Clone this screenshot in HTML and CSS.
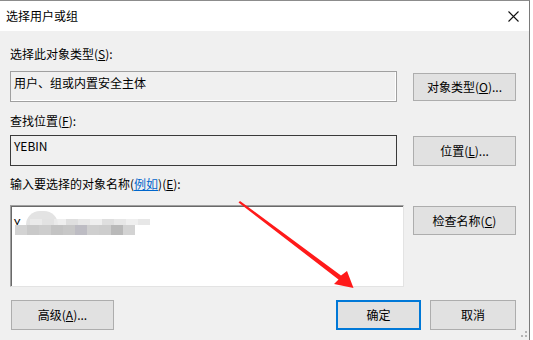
FILE: index.html
```
<!DOCTYPE html>
<html lang="zh-CN">

<head>
    <meta charset="UTF-8">
    <title>选择用户或组</title>
    <link rel="stylesheet" href="styles.css">
</head>

<body>
    <div class="window">
        <div class="titlebar">
            <span class="title">选择用户或组</span>
            <svg class="close" width="11" height="11" viewBox="0 0 11 11">
                <path d="M0.5 0.5 L10.5 10.5 M10.5 0.5 L0.5 10.5" stroke="#111" stroke-width="1.1" fill="none"/>
            </svg>
        </div>

        <div class="content">
            <div class="label label-type">选择此对象类型(<u>S</u>):</div>
            <div class="row row-type">
                <div class="field">用户、组或内置安全主体</div>
                <button class="btn">对象类型(<u>O</u>)...</button>
            </div>

            <div class="label label-location">查找位置(<u>F</u>):</div>
            <div class="row row-location">
                <div class="field field-dark">YEBIN</div>
                <button class="btn">位置(<u>L</u>)...</button>
            </div>

            <div class="label label-names">输入要选择的对象名称(<a class="link">例如</a>)(<u>E</u>):</div>
            <div class="row row-names">
                <div class="names">
                    <span class="names-text">Y</span>
                    <!-- blurred account name -->
                    <div class="mosaic">
                        <div class="blob"></div>
                        <div class="mosaic-top">
                            <i class="m1"></i><i class="m2"></i><i class="m1"></i><i class="m3"></i><i class="m2"></i><i class="m1"></i><i class="m3"></i><i class="m2"></i><i class="m1"></i><i class="m2"></i>
                        </div>
                        <div class="mosaic-bottom">
                            <i class="b1"></i><i class="b2"></i><i class="b3"></i><i class="b4"></i><i class="b5"></i><i class="b6"></i><i class="b7"></i><i class="b3"></i><i class="b8"></i><i class="b1"></i>
                        </div>
                    </div>
                </div>
                <button class="btn btn-check">检查名称(<u>C</u>)</button>
            </div>

            <div class="actions">
                <button class="btn btn-advanced">高级(<u>A</u>)...</button>
                <button class="btn btn-ok">确定</button>
                <button class="btn btn-cancel">取消</button>
            </div>
        </div>

        <svg class="grip" width="6" height="6" viewBox="0 0 6 6">
            <rect x="4" y="0" width="2" height="2" fill="#b4b4b4"/>
            <rect x="0" y="4" width="2" height="2" fill="#b4b4b4"/>
            <rect x="4" y="4" width="2" height="2" fill="#b4b4b4"/>
        </svg>
    </div>

    <!-- red annotation arrow -->
    <svg class="arrow" width="533" height="340" viewBox="0 0 533 340">
        <polygon points="238.5,202.5 240,201 341,275.5 347,271 353.5,288 334,284 338.5,279.5" fill="#ff1a1a"/>
    </svg>
</body>

</html>
```

FILE: styles.css
```
* {
    box-sizing: border-box;
}

body {
    margin: 0;
    background: #ffffff;
    font-family: "Noto Sans CJK SC", "Noto Sans", sans-serif;
    font-size: 12px;
    line-height: 16px;
    color: #000;
    width: 533px;
    height: 340px;
    overflow: hidden;
    position: relative;
}

.window {
    width: 530px;
    height: 340px;
    background-color: #f0f0f0;
    border-top: 1px solid #8c8c8c;
    border-right: 1px solid #7a7a7a;
    position: relative;
}

.titlebar {
    height: 30px;
    background: #ffffff;
    display: flex;
    align-items: center;
    padding-left: 6px;
}

.title {
    flex: 1;
    font-size: 12px;
}

.close {
    margin-right: 10px;
}

.content {
    padding: 15px 0 0 10px;
    width: 516px;
}

.label {
    height: 16px;
}

.label-type {
    margin-bottom: 9px;
}

.label-location {
    margin-bottom: 6px;
}

.label-names {
    margin-bottom: 13px;
}

.link {
    color: #0066cc;
    text-decoration: underline;
}

.row {
    display: flex;
    align-items: flex-start;
}

.row-type {
    margin-bottom: 11px;
}

.row-location {
    margin-bottom: 10px;
}

.row-names {
    margin-bottom: 13px;
}

.field {
    width: 387px;
    height: 31px;
    border: 1px solid #a0a0a0;
    box-shadow: inset -1px -1px 0 #ffffff;
    padding: 3px 3px;
}

.field-dark {
    border-color: #3a3a3a;
    box-shadow: none;
    padding-top: 2px;
}

.btn {
    font-family: inherit;
    font-size: 12px;
    line-height: 16px;
    color: #000;
    background: #e1e1e1;
    border: 1px solid #adadad;
    padding: 0;
    width: 103px;
    margin-left: 16px;
}

.row-type .btn {
    height: 28px;
    margin-top: 2px;
}

.row-location .btn {
    height: 30px;
    margin-top: 1px;
}

.names {
    width: 394px;
    height: 82px;
    background: #ffffff;
    border-top: 1px solid #a0a0a0;
    border-left: 1px solid #a0a0a0;
    border-right: 1px solid #e3e3e3;
    border-bottom: 1px solid #e3e3e3;
    box-shadow: inset 1px 1px 0 #696969;
    padding: 9px 2px;
    position: relative;
}

.names-text {
    display: block;
    padding-left: 1px;
}

.mosaic {
    position: absolute;
    left: 4px;
    top: 4px;
    width: 122px;
    height: 26px;
}

.blob {
    position: absolute;
    left: 11px;
    top: 1px;
    width: 32px;
    height: 14px;
    border-radius: 16px 16px 0 0;
    background: #e3e3e3;
}

.mosaic-top,
.mosaic-bottom {
    position: absolute;
    left: 0;
    display: flex;
}

.mosaic-top {
    top: 9px;
    left: 15px;
    height: 6px;
    opacity: 0.8;
}

.mosaic-bottom {
    top: 15px;
    height: 10px;
}

.mosaic i {
    display: block;
    width: 12px;
    height: 100%;
}

.m1 { background: #ececec; }
.m2 { background: #e2e2e2; }
.m3 { background: #d8d8d8; }

.b1 { background: #d3d3d3; }
.b2 { background: #c9c9c9; }
.b3 { background: #cdcdcd; }
.b4 { background: #c3c3c3; }
.b5 { background: #c7c7c7; }
.b6 { background: #bdbcc3; }
.b7 { background: #cfcfcf; }
.b8 { background: #b9b9b9; }

.btn-check {
    height: 29px;
    margin-top: 1px;
    margin-left: 9px;
}

.actions {
    display: flex;
}

.actions .btn {
    height: 30px;
}

.btn-advanced {
    margin-left: 1px;
}

.btn-ok {
    width: 85px;
    margin-left: auto;
    border: 2px solid #0078d7;
}

.btn-cancel {
    width: 86px;
    margin-left: 9px;
}

.grip {
    position: absolute;
    right: 2px;
    bottom: 3px;
}

.arrow {
    position: absolute;
    left: 0;
    top: 0;
    pointer-events: none;
}
```
